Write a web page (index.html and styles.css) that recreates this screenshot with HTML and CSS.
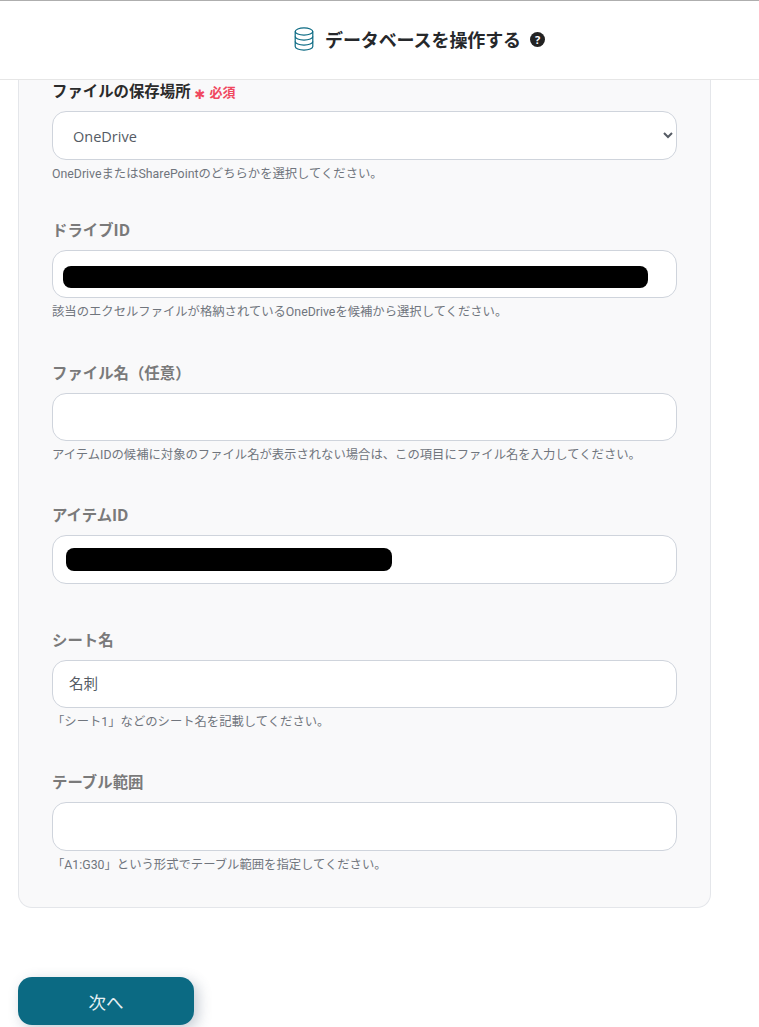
FILE: index.html
```html
<!DOCTYPE html>
<html lang="ja">
<head>
  <meta charset="UTF-8" />
  <meta name="viewport" content="width=device-width, initial-scale=1.0"/>
  <title>データベースを操作する</title>
  <link rel="stylesheet" href="styles.css">
</head>
<body>
  <header class="topbar">
    <svg class="db-icon" width="20" height="24" viewBox="0 0 20 24" fill="none" stroke="#0b6a83" stroke-width="1.2">
      <ellipse cx="10" cy="4.5" rx="8.8" ry="3.6"/>
      <path d="M1.2 4.5v15c0 2 3.9 3.6 8.8 3.6s8.8-1.6 8.8-3.6v-15"/>
      <path d="M1.2 9.5c0 2 3.9 3.6 8.8 3.6s8.8-1.6 8.8-3.6"/>
      <path d="M1.2 14.5c0 2 3.9 3.6 8.8 3.6s8.8-1.6 8.8-3.6"/>
    </svg>
    <span class="topbar-title">データベースを操作する</span>
    <span class="help-badge">?</span>
  </header>

  <main class="content">
    <section class="card">
      <!-- File location -->
      <div class="field">
        <label class="label label-dark">ファイルの保存場所<span class="required"><span class="asterisk">✱</span>必須</span></label>
        <select class="control select">
          <option>OneDrive</option>
          <option>SharePoint</option>
        </select>
        <p class="help">OneDriveまたはSharePointのどちらかを選択してください。</p>
      </div>

      <div class="field field-drive">
        <label class="label">ドライブID</label>
        <div class="control masked"><span class="mask mask-drive"></span></div>
        <p class="help">該当のエクセルファイルが格納されているOneDriveを候補から選択してください。</p>
      </div>

      <div class="field field-name">
        <label class="label">ファイル名（任意）</label>
        <input class="control" type="text">
        <p class="help">アイテムIDの候補に対象のファイル名が表示されない場合は、この項目にファイル名を入力してください。</p>
      </div>

      <div class="field field-item">
        <label class="label">アイテムID</label>
        <div class="control control-tall masked"><span class="mask mask-item"></span></div>
      </div>

      <div class="field field-sheet">
        <label class="label">シート名</label>
        <input class="control" type="text" value="名刺">
        <p class="help">「シート1」などのシート名を記載してください。</p>
      </div>

      <div class="field field-range">
        <label class="label">テーブル範囲</label>
        <input class="control control-tall" type="text">
        <p class="help">「A1:G30」という形式でテーブル範囲を指定してください。</p>
      </div>
    </section>

    <button class="next-btn">次へ</button>
  </main>
</body>
</html>
```

FILE: styles.css
```css
* {
  box-sizing: border-box;
}
html, body {
  height: 1027px;
  overflow: hidden;
}
body {
  margin: 0;
  background-color: #fff;
  color: #6b7280;
  font-family: "Open Sans", "Noto Sans CJK JP", sans-serif;
}
.topbar {
  height: 80px;
  display: flex;
  align-items: center;
  padding: 0 0 2px 294px;
  background-color: #fff;
  border-top: 1px solid #aeaeae;
  border-bottom: 1px solid #e6e6e6;
}
.db-icon {
  margin-right: 11px;
}
.topbar-title {
  font-size: 18px;
  font-weight: 700;
  color: #26282b;
  letter-spacing: -0.1px;
}
.help-badge {
  width: 15px;
  height: 15px;
  margin-left: 9px;
  border-radius: 50%;
  background-color: #222;
  color: #fff;
  font-size: 11px;
  font-weight: 700;
  line-height: 15px;
  text-align: center;
}
.content {
  padding: 0 18px;
}
.card {
  width: 693px;
  height: 828px;
  padding: 0 33px;
  background-color: #f9f9fa;
  border: 1px solid #e4e6ea;
  border-top: none;
  border-radius: 0 0 14px 14px;
}
.field {
  display: flex;
  flex-direction: column;
}
.label {
  height: 22px;
  margin-bottom: 9px;
  font-size: 15.4px;
  font-weight: 700;
  line-height: 24px;
  color: #7a7a7a;
}
.label-dark {
  color: #2b2b2b;
}
.required {
  margin-left: 4px;
  font-size: 13px;
  color: #f0485f;
}
.asterisk {
  margin-right: 4px;
  font-family: "DejaVu Sans", sans-serif;
  font-size: 13px;
  vertical-align: -2px;
}
.control {
  width: 625px;
  height: 48px;
  padding: 0 16px 3px;
  font-family: "Open Sans", "Noto Sans CJK JP", sans-serif;
  font-size: 14.5px;
  color: #555b64;
  background-color: #fff;
  border: 1px solid #cfd4dc;
  border-radius: 14px;
}
.control-tall {
  height: 49px;
}
.select {
  height: 49px;
  padding: 2px 16px 0;
}
.masked {
  display: flex;
  align-items: center;
  padding-bottom: 0;
}
.mask {
  display: block;
  background-color: #000;
  border-radius: 8px;
}
.mask-drive {
  width: 585px;
  height: 22px;
  margin: 5px 0 0 -6px;
}
.mask-item {
  width: 326px;
  height: 23px;
  margin-left: -3px;
}
.help {
  margin: 5px 0 0;
  font-family: Roboto, "Noto Sans CJK JP", sans-serif;
  font-size: 12.33px;
  line-height: 18px;
  color: #70757d;
}
.field-drive {
  margin-top: 36px;
}
.field-name {
  margin-top: 41px;
}
.field-item {
  margin-top: 40px;
}
.field-sheet {
  margin-top: 45px;
}
.field-range {
  margin-top: 40px;
}
.next-btn {
  display: block;
  width: 176px;
  height: 48px;
  margin-top: 69px;
  font-family: "Open Sans", "Noto Sans CJK JP", sans-serif;
  font-size: 17.5px;
  color: #e6f0f3;
  background-color: #0b6a83;
  border: none;
  border-radius: 14px;
  box-shadow: 4px 4px 14px rgba(60, 80, 110, 0.3);
}
```
